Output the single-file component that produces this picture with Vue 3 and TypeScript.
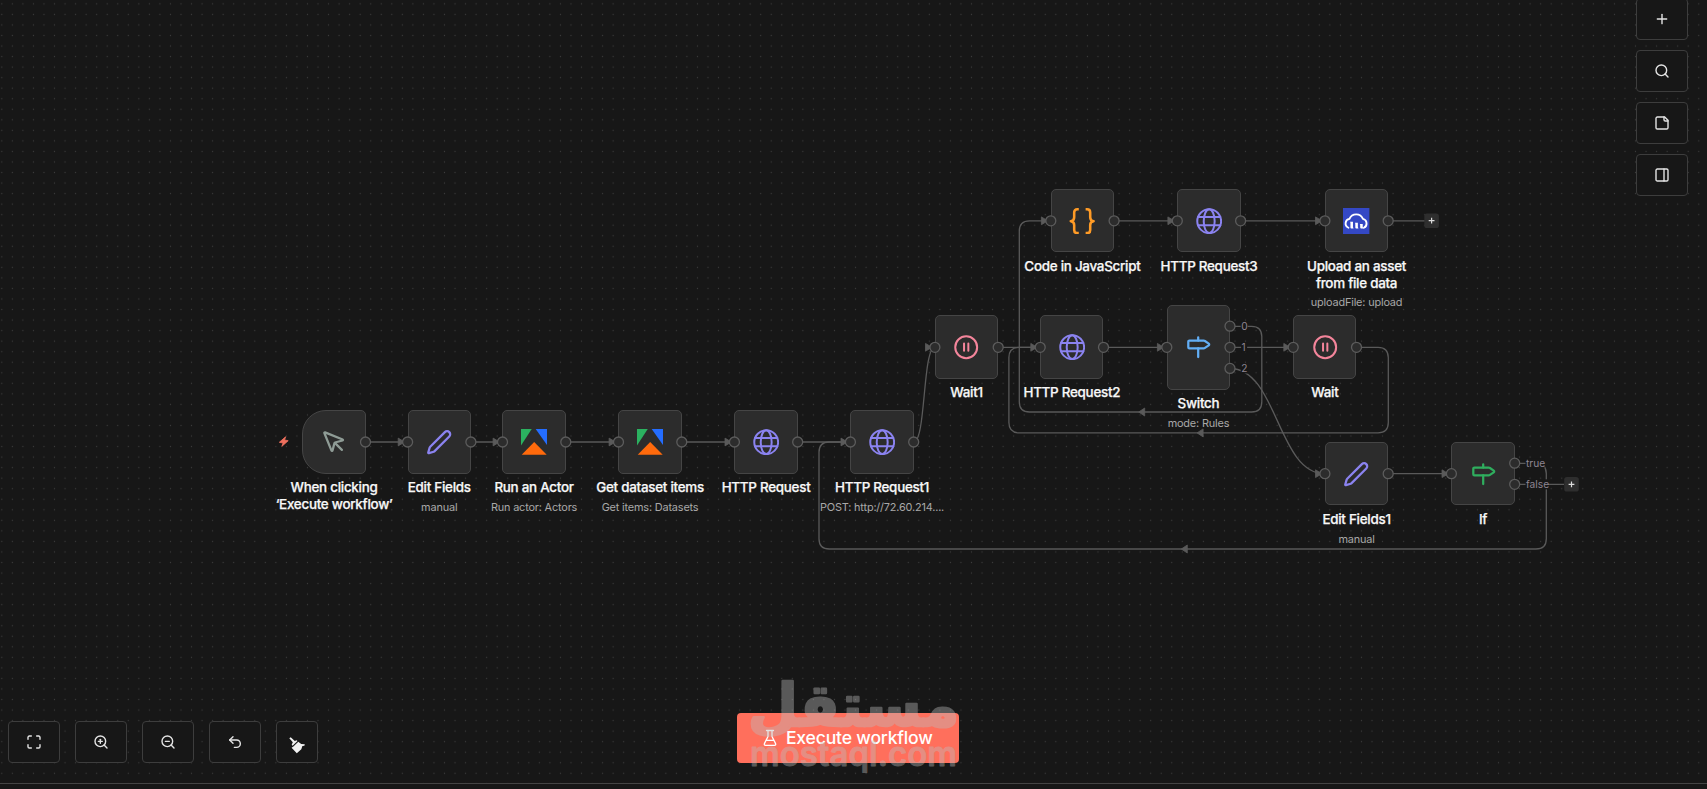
<script setup lang="ts">
type IconName = 'cursor' | 'pen' | 'apify' | 'globe' | 'pause' | 'code' | 'cloud' | 'sign'

interface FlowNode {
  id: string
  x: number
  y: number
  icon: IconName
  color: string
  title: string[]
  subtitle?: string
  trigger?: boolean
  tall?: boolean
}

const violet = '#8b83f0'
const pink = '#f4859b'

const nodes: FlowNode[] = [
  { id: 'trigger', x: 302.4, y: 410.4, icon: 'cursor', color: '#8f9c96', title: ['When clicking', '‘Execute workflow’'], trigger: true },
  { id: 'edit', x: 407.6, y: 410.4, icon: 'pen', color: violet, title: ['Edit Fields'], subtitle: 'manual' },
  { id: 'actor', x: 502.4, y: 410.4, icon: 'apify', color: '', title: ['Run an Actor'], subtitle: 'Run actor: Actors' },
  { id: 'dataset', x: 618.4, y: 410.4, icon: 'apify', color: '', title: ['Get dataset items'], subtitle: 'Get items: Datasets' },
  { id: 'http', x: 734.4, y: 410.4, icon: 'globe', color: violet, title: ['HTTP Request'] },
  { id: 'http1', x: 850.4, y: 410.4, icon: 'globe', color: violet, title: ['HTTP Request1'], subtitle: 'POST: http://72.60.214....' },
  { id: 'wait1', x: 934.9, y: 315.4, icon: 'pause', color: pink, title: ['Wait1'] },
  { id: 'http2', x: 1040.2, y: 315.4, icon: 'globe', color: violet, title: ['HTTP Request2'] },
  { id: 'switch', x: 1166.8, y: 305, icon: 'sign', color: '#62aef5', title: ['Switch'], subtitle: 'mode: Rules', tall: true },
  { id: 'wait', x: 1293.2, y: 315.4, icon: 'pause', color: pink, title: ['Wait'] },
  { id: 'code', x: 1050.8, y: 189.2, icon: 'code', color: '#ff9b26', title: ['Code in JavaScript'] },
  { id: 'http3', x: 1177.3, y: 189.2, icon: 'globe', color: violet, title: ['HTTP Request3'] },
  { id: 'upload', x: 1324.9, y: 189.2, icon: 'cloud', color: '', title: ['Upload an asset', 'from file data'], subtitle: 'uploadFile: upload' },
  { id: 'edit1', x: 1324.9, y: 442.2, icon: 'pen', color: violet, title: ['Edit Fields1'], subtitle: 'manual' },
  { id: 'if', x: 1451.4, y: 442.2, icon: 'sign', color: '#2fae5e', title: ['If'] },
]

const edges: string[] = [
  'M365.5 442H407.6',
  'M470.9 442H502.5',
  'M565.8 442H618.5',
  'M681.8 442H734.4',
  'M797.7 442H850.4',
  'M913.7 442C926 442 922.5 347.3 934.9 347.3',
  'M998.2 347.3H1040.2',
  'M1103.5 347.3H1166.8',
  'M1230 347.3H1293.2',
  'M1114.1 220.8H1177.3',
  'M1240.6 220.8H1324.9',
  'M1388.2 220.8H1425',
  'M1388.2 473.7H1451.4',
  'M1514.7 484.3H1564',
  'M1230 326.3H1251.5Q1261.8 326.3 1261.8 336.6V401.7Q1261.8 412 1251.5 412H1029.6Q1019.3 412 1019.3 401.7V231.1Q1019.3 220.8 1029.6 220.8H1050.8',
  'M1356.5 347.3H1378Q1388.3 347.3 1388.3 357.6V422.6Q1388.3 432.9 1378 432.9H1019.2Q1008.9 432.9 1008.9 422.6V357.6Q1008.9 347.3 1019.2 347.3H1040',
  'M1230 368.5C1277.5 368.5 1277.5 473.7 1324.9 473.7',
  'M1514.7 463.3H1536Q1546.3 463.3 1546.3 473.6V538.7Q1546.3 549 1536 549H829.3Q819 549 819 538.7V452.3Q819 442 829.3 442H850.4',
]

const inputs: [number, number][] = [
  [407.6, 442], [502.5, 442], [618.5, 442], [734.4, 442], [850.4, 442],
  [934.9, 347.3], [1040.2, 347.3], [1166.8, 347.3], [1293.2, 347.3],
  [1050.8, 220.8], [1177.3, 220.8], [1324.9, 220.8], [1324.9, 473.7], [1451.4, 473.7],
]
const outputs: [number, number][] = [
  [365.5, 442], [470.9, 442], [565.8, 442], [681.8, 442], [797.7, 442], [913.7, 442],
  [998.2, 347.3], [1103.5, 347.3], [1230, 326.2], [1230, 347.3], [1230, 368.4], [1356.5, 347.3],
  [1114.1, 220.8], [1240.6, 220.8], [1388.2, 220.8], [1388.2, 473.7], [1514.7, 463.2], [1514.7, 484.3],
]
const backArrows: [number, number][] = [[1142, 412], [1200.4, 432.9], [1184.6, 549]]
const plusPoints: [number, number][] = [[1431.6, 220.7], [1571.5, 484.3]]
const portLabels: { x: number; y: number; w: number; text: string }[] = [
  { x: 1241.2, y: 326.3, w: 6, text: '0' },
  { x: 1241.6, y: 347.3, w: 5, text: '1' },
  { x: 1241.2, y: 368.5, w: 6, text: '2' },
  { x: 1526, y: 463.3, w: 18, text: 'true' },
  { x: 1526, y: 484.3, w: 21.5, text: 'false' },
]

const viewTools: { label: string; paths: string[]; circle?: boolean; broom?: boolean }[] = [
  { label: 'Fit view', paths: ['M8 3H5a2 2 0 0 0-2 2v3', 'M21 8V5a2 2 0 0 0-2-2h-3', 'M3 16v3a2 2 0 0 0 2 2h3', 'M16 21h3a2 2 0 0 0 2-2v-3'] },
  { label: 'Zoom in', circle: true, paths: ['m21 21-4.35-4.35', 'M11 8v6', 'M8 11h6'] },
  { label: 'Zoom out', circle: true, paths: ['m21 21-4.35-4.35', 'M8 11h6'] },
  { label: 'Undo', paths: ['M9 14 4 9l5-5', 'M4 9h10.5a5.5 5.5 0 0 1 0 11H11'] },
  { label: 'Tidy up', broom: true, paths: ['M.3 1.3 1.7.3 5.8 4 7.6 3.2 8.5 4 3.6 8.7 2.7 7.7 3.8 5.3z', 'M9.3 4.8 12.2 6.9 15.8 7.2 15.4 8.8 13.4 9 12.3 12.2 7.8 16.3 2.6 10.8 4.4 9.6z'] },
]
const sideTools: { label: string; paths: string[]; circle?: boolean }[] = [
  { label: 'Add node', paths: ['M5 12h14', 'M12 5v14'] },
  { label: 'Search', circle: true, paths: ['m21 21-4.35-4.35'] },
  { label: 'Add note', paths: ['M16 3H5a2 2 0 0 0-2 2v14a2 2 0 0 0 2 2h14a2 2 0 0 0 2-2V8Z', 'M15 3v4a2 2 0 0 0 2 2h4'] },
  { label: 'Toggle panel', paths: ['M5 3h14a2 2 0 0 1 2 2v14a2 2 0 0 1-2 2H5a2 2 0 0 1-2-2V5a2 2 0 0 1 2-2z', 'M15 3v18'] },
]
</script>

<template>
  <main class="canvas">
    <svg class="layer" width="1707" height="789">
      <defs>
        <pattern id="dots" x="-3.45" y="-1.4" width="10.54" height="10.54" patternUnits="userSpaceOnUse">
          <circle cx="5.27" cy="5.27" r="0.62" fill="#3c3c3c" />
        </pattern>
      </defs>
      <rect width="1707" height="789" fill="url(#dots)" />
      <path v-for="d in edges" :key="d" :d="d" class="edge" />
      <path v-for="[x, y] in backArrows" :key="`b${x}`" :d="`M${x - 3.3} ${y}l6 -4v8z`" class="arrow" />
      <path v-for="[x, y] in inputs" :key="`a${x}-${y}`" :d="`M${x - 9.4} ${y - 3.9}l6.5 3.9l-6.5 3.9z`" class="arrow" />
    </svg>

    <section
      v-for="n in nodes"
      :key="n.id"
      class="node"
      :style="{ left: n.x + 'px', top: n.y + 'px' }"
    >
      <div class="card" :class="{ trigger: n.trigger, tall: n.tall }">
        <svg v-if="n.icon === 'cursor'" class="icon" viewBox="0 0 24 24" :stroke="n.color">
          <path d="M12.586 12.586 19 19" />
          <path d="M3.688 3.037a.497.497 0 0 0-.651.651l6.5 15.999a.501.501 0 0 0 .947-.062l1.569-6.083a2 2 0 0 1 1.448-1.479l6.124-1.579a.5.5 0 0 0 .063-.947z" />
        </svg>
        <svg v-else-if="n.icon === 'pen'" class="icon" viewBox="0 0 24 24" :stroke="n.color">
          <path d="M21.174 6.812a1 1 0 0 0-3.986-3.987L3.842 16.174a2 2 0 0 0-.5.83l-1.321 4.352a.5.5 0 0 0 .623.622l4.353-1.32a2 2 0 0 0 .83-.497z" />
        </svg>
        <svg v-else-if="n.icon === 'apify'" class="icon solid" viewBox="0 0 27 27">
          <path d="M0 0h11L0 17z" fill="#2bb160" />
          <path d="M15 0h12v17z" fill="#246dff" />
          <path d="M.7 26.3 13.5 13.4 26.3 26.3z" fill="#ff6a0c" />
        </svg>
        <svg v-else-if="n.icon === 'globe'" class="icon" viewBox="0 0 27 27" :stroke="n.color">
          <circle cx="13.5" cy="13.5" r="12.2" />
          <ellipse cx="13.5" cy="13.5" rx="5.6" ry="12.2" />
          <path d="M2 9.3h23M2 17.7h23" />
        </svg>
        <svg v-else-if="n.icon === 'pause'" class="icon" viewBox="0 0 27 27" :stroke="n.color">
          <circle cx="13.5" cy="13.5" r="11.2" />
          <path d="M11.3 9.8v7.4M15.7 9.8v7.4" />
        </svg>
        <svg v-else-if="n.icon === 'code'" class="icon brace" viewBox="0 0 27 27" :stroke="n.color">
          <path d="M10 1.3H8.5Q5.3 1.3 5.3 4.5V9.5Q5.3 13.2 1.8 13.5Q5.3 13.8 5.3 17.5V22.5Q5.3 25.7 8.5 25.7H10" />
          <path d="M17 1.3H18.5Q21.7 1.3 21.7 4.5V9.5Q21.7 13.2 25.2 13.5Q21.7 13.8 21.7 17.5V22.5Q21.7 25.7 18.5 25.7H17" />
        </svg>
        <svg v-else-if="n.icon === 'cloud'" class="icon solid" viewBox="0 0 27 27">
          <rect width="27" height="27" fill="#3448c5" />
          <path d="M5.6 20.2A4.7 4.7 0 0 1 6.6 11.2A7.4 7.4 0 0 1 20.4 11.2A4.8 4.8 0 0 1 21.4 20.2" fill="none" stroke="#fff" stroke-width="1.9" />
          <path d="M7.2 14h3v5.5l.6 1.6H8.5Q7.6 21.1 7.6 20V15zM12.2 15h3v4.5l.6 1.6H13.6Q12.6 21.1 12.6 20V16zM17.2 16.400h3v3.1l.6 1.6H18.6Q17.6 21.1 17.6 20V17.400z" fill="#fff" />
        </svg>
        <svg v-else class="icon" viewBox="0 0 24 24" :stroke="n.color">
          <path d="M12 13v8M12 3v3" />
          <path d="M4 6a1 1 0 0 0-1 1v5a1 1 0 0 0 1 1h13a2 2 0 0 0 1.152-.365l3.424-2.317a1 1 0 0 0 0-1.635l-3.424-2.318A2 2 0 0 0 17 6z" />
        </svg>
      </div>
      <div class="caption">
        <div v-for="line in n.title" :key="line" class="title">{{ line }}</div>
        <div v-if="n.subtitle" class="subtitle">{{ n.subtitle }}</div>
      </div>
    </section>

    <svg class="layer" width="1707" height="789">
      <circle v-for="[x, y] in inputs" :key="`i${x}-${y}`" :cx="x" :cy="y" r="5" class="port" />
      <circle v-for="[x, y] in outputs" :key="`o${x}-${y}`" :cx="x" :cy="y" r="5" class="port" />
      <g v-for="p in portLabels" :key="p.text">
        <rect :x="p.x - 0.5" :y="p.y - 5" :width="p.w + 1" height="10" fill="#171717" />
        <text :x="p.x" :y="p.y + 3.9" class="port-label">{{ p.text }}</text>
      </g>
      <g v-for="[x, y] in plusPoints" :key="`p${x}`">
        <rect :x="x - 7.3" :y="y - 7.3" width="14.6" height="14.6" rx="2.6" fill="#2e2e2e" />
        <path :d="`M${x - 2.9} ${y}h5.8M${x} ${y - 2.9}v5.8`" stroke="#dcdcdc" stroke-width="1.2" />
      </g>
      <path d="M285.6 436.8 279.3 442.3 283.1 443 281.8 446.4 288.2 440.7 284.6 440z" fill="#f0705e" stroke="#f0705e" stroke-width="0.8" stroke-linejoin="round" />
    </svg>

    <nav class="side-tools">
      <button v-for="t in sideTools" :key="t.label" :aria-label="t.label">
        <svg class="tool-icon" viewBox="0 0 24 24">
          <circle v-if="t.circle" cx="11" cy="11" r="8" />
          <path v-for="d in t.paths" :key="d" :d="d" />
        </svg>
      </button>
    </nav>

    <nav class="view-tools">
      <button v-for="t in viewTools" :key="t.label" :aria-label="t.label" :class="{ narrow: t.broom }">
        <svg class="tool-icon" :class="{ broom: t.broom }" :viewBox="t.broom ? '0 0 16 16' : '0 0 24 24'">
          <circle v-if="t.circle" cx="11" cy="11" r="8" />
          <path v-for="d in t.paths" :key="d" :d="d" />
        </svg>
      </button>
    </nav>

    <button class="execute">
      <svg viewBox="0 0 14 18" width="14" height="18">
        <path d="M3.5 1.5h7M5 1.5v6L1.4 14.6Q.8 16.3 2.6 16.3H11.4Q13.2 16.3 12.6 14.6L9 7.5v-6M3.3 11.3h7.4" />
      </svg>
      <span>Execute workflow</span>
    </button>

    <svg class="layer watermark" width="1707" height="789">
      <text class="arabic" x="0" y="0" transform="translate(853.5 725.5) scale(0.98 1)" text-anchor="middle">مستقل</text>
      <text class="latin" x="750" y="765.5" textLength="207" lengthAdjust="spacingAndGlyphs">mostaql.com</text>
    </svg>

    <footer class="panel-edge"></footer>
  </main>
</template>

<style>
body {
  background: #171717;
  overflow: hidden;
}
</style>

<style scoped>
.canvas {
  position: relative;
  width: 1707px;
  height: 789px;
  overflow: hidden;
  background: #171717;
  font-family: Inter, 'Noto Sans', sans-serif;
}
.layer {
  position: absolute;
  inset: 0;
  pointer-events: none;
}
.edge {
  fill: none;
  stroke: #5a5a5a;
  stroke-width: 1.3;
}
.arrow {
  fill: #5a5a5a;
  stroke: #5a5a5a;
  stroke-width: 0.8;
  stroke-linejoin: round;
}
.port {
  fill: #2c2c2c;
  stroke: #5c5c5c;
  stroke-width: 1.3;
}
.port-label {
  fill: #8e8592;
  font-size: 10.2px;
}
.node {
  position: absolute;
  width: 63.3px;
  display: flex;
  flex-direction: column;
  align-items: center;
}
.card {
  box-sizing: border-box;
  width: 63.3px;
  height: 63.3px;
  flex: none;
  display: flex;
  align-items: center;
  justify-content: center;
  background: #2c2c2c;
  border: 1px solid #454545;
  border-radius: 5px;
}
.card.trigger {
  border-radius: 24px 5px 5px 24px;
}
.card.tall {
  height: 84.6px;
}
.icon {
  width: 26.4px;
  height: 26.4px;
  fill: none;
  stroke-width: 2.05;
  stroke-linecap: round;
  stroke-linejoin: round;
}
.icon.brace {
  stroke-width: 2.6;
  stroke-linecap: butt;
}
.icon.solid {
  stroke: none;
}
.caption {
  display: flex;
  flex-direction: column;
  align-items: center;
  padding-top: 5.8px;
  white-space: nowrap;
}
.title {
  font-size: 13.4px;
  line-height: 16.4px;
  font-weight: 500;
  letter-spacing: -0.26px;
  color: #f8f8f8;
  -webkit-text-stroke: 0.25px #f8f8f8;
}
.subtitle {
  margin-top: 4px;
  font-size: 10.9px;
  line-height: 14px;
  letter-spacing: -0.17px;
  color: #a8a8a8;
}
button {
  box-sizing: border-box;
  padding: 0;
  margin: 0;
  width: 52px;
  height: 42px;
  display: flex;
  align-items: center;
  justify-content: center;
  background: #171717;
  border: 1px solid #3d3d3d;
  border-radius: 4px;
  font-family: inherit;
}
button.narrow {
  width: 42px;
}
.tool-icon {
  width: 16px;
  height: 16px;
  fill: none;
  stroke: #e4e4e4;
  stroke-width: 2.1;
  stroke-linecap: round;
  stroke-linejoin: round;
}
.tool-icon.broom {
  margin-top: 5px;
  fill: #f2f2f2;
  stroke: none;
  overflow: visible;
}
.side-tools {
  position: absolute;
  top: -2px;
  right: 19px;
  display: flex;
  flex-direction: column;
  gap: 10px;
}
.view-tools {
  position: absolute;
  left: 8px;
  bottom: 26px;
  display: flex;
  gap: 15px;
}
.execute {
  position: absolute;
  left: 737px;
  top: 713px;
  width: 222px;
  height: 50px;
  padding-bottom: 1px;
  gap: 8.5px;
  background: #ff6f5c;
  border: none;
  color: #fff;
  font-size: 17.6px;
  font-weight: 500;
  letter-spacing: -0.2px;
}
.execute svg {
  fill: none;
  stroke: #fff;
  stroke-width: 1.3;
  stroke-linecap: round;
  stroke-linejoin: round;
}
.watermark {
  opacity: 0.4;
  fill: #bdbdbd;
  stroke: #bdbdbd;
  stroke-linejoin: round;
}
.arabic {
  font-family: 'DejaVu Sans', sans-serif;
  font-size: 59px;
  font-weight: 700;
  stroke-width: 2.4;
}
.latin {
  font-family: Inter, sans-serif;
  font-size: 33.5px;
  font-weight: 600;
  stroke-width: 0.8;
}
.panel-edge {
  position: absolute;
  left: 0;
  right: 0;
  bottom: 0;
  height: 5px;
  border-top: 1px solid #444;
  background: #171717;
}
</style>
